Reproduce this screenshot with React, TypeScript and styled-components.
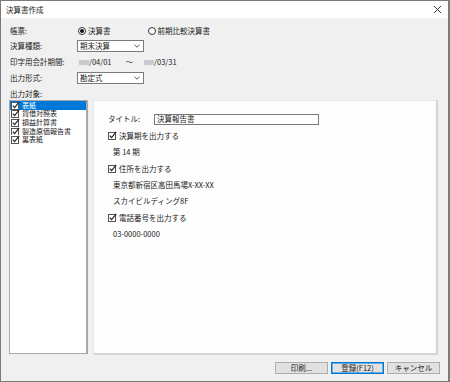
import React from 'react';
import styled, { createGlobalStyle } from 'styled-components';

const GlobalStyle = createGlobalStyle`
    html, body {
        margin: 0;
        padding: 0;
        background: #ffffff;
    }
    body {
        font-family: "Noto Sans CJK JP", "Noto Sans", sans-serif;
        font-size: 7.5px;
        color: #1a1a1a;
    }
`;

const Window = styled.div`
    box-sizing: border-box;
    width: 450px;
    height: 382px;
    border: 1px solid #7a7a7a;
    border-right-width: 2px;
    display: flex;
    flex-direction: column;
    background: #f0f0f0;
`;

const TitleBar = styled.div`
    height: 17px;
    flex: none;
    background: #ffffff;
    display: flex;
    align-items: center;
    justify-content: space-between;
    padding: 0 5px 0 5px;
    line-height: 1;
`;

const CloseButton = styled.span`
    display: flex;
    width: 9px;
    height: 9px;
    margin-right: 1px;
`;

const Body = styled.div`
    flex: 1;
    display: flex;
    flex-direction: column;
    padding: 8px 10px 0 8px;
`;

const FormGrid = styled.div`
    display: grid;
    grid-template-columns: 68px 1fr;
    grid-template-rows: 10px 12px 12px 12px 12px;
    row-gap: 4px;
    align-items: center;
`;

const Label = styled.div`
    padding-left: 1px;
    line-height: 1;
    white-space: nowrap;
`;

const Field = styled.div`
    display: flex;
    align-items: center;
    line-height: 1;
    white-space: nowrap;
`;

const RadioLabel = styled.label<{ $gap?: number }>`
    display: flex;
    align-items: center;
    gap: 2px;
    margin-left: ${(p) => p.$gap ?? 0}px;
`;

const RadioCircle = styled.span<{ $on?: boolean }>`
    box-sizing: border-box;
    width: 8px;
    height: 8px;
    border-radius: 50%;
    border: 1px solid #333;
    background: #fff;
    display: flex;
    align-items: center;
    justify-content: center;

    &::after {
        content: '';
        width: 4px;
        height: 4px;
        border-radius: 50%;
        background: ${(p) => (p.$on ? '#111' : 'transparent')};
    }
`;

const Select = styled.div`
    box-sizing: border-box;
    width: 67px;
    height: 12px;
    border: 1px solid #7a7a7a;
    background: #fff;
    display: flex;
    align-items: center;
    justify-content: space-between;
    padding: 0 3px 0 2px;
`;

const Blurred = styled.span<{ $ml?: number }>`
    display: inline-block;
    width: 10px;
    height: 5px;
    margin-left: ${(p) => p.$ml ?? 0}px;
    background: #c9c9d2;
    filter: blur(0.6px);
`;

const Tilde = styled.span`
    margin-left: 14px;
`;

const ContentRow = styled.div`
    display: flex;
    gap: 5px;
    height: 255px;
`;

const ListBox = styled.div`
    box-sizing: border-box;
    width: 79px;
    height: 254px;
    border: 1px solid #a8a8a8;
    border-right-width: 2px;
    background: #fff;
`;

const ListItem = styled.div<{ $selected?: boolean }>`
    height: 8.6px;
    display: flex;
    align-items: center;
    gap: 2px;
    padding-left: 1px;
    font-size: 7px;
    line-height: 7px;
    white-space: nowrap;
    overflow: hidden;
    color: ${(p) => (p.$selected ? '#fff' : '#1a1a1a')};
    background: ${(p) => (p.$selected ? '#0078d7' : 'transparent')};
`;

const Panel = styled.div`
    box-sizing: border-box;
    flex: 1;
    background: #fefdfd;
    border: 1px solid #e6e6e6;
    border-right: 2px solid #d4d4d4;
    border-bottom: 2px solid #d4d4d4;
    padding: 10px 0 0 14px;
    display: flex;
    flex-direction: column;
`;

const PanelRow = styled.div<{ $indent?: number }>`
    height: 16.4px;
    display: flex;
    align-items: center;
    padding-left: ${(p) => p.$indent ?? 0}px;
    line-height: 1;
    white-space: nowrap;
`;

const TitleLabel = styled.span`
    width: 46px;
`;

const TextInput = styled.div`
    box-sizing: border-box;
    width: 165px;
    height: 11px;
    border: 1px solid #7a7a7a;
    background: #fff;
    display: flex;
    align-items: center;
    padding-left: 2px;
`;

const CheckLabel = styled.label`
    display: flex;
    align-items: center;
    gap: 2px;
`;

const Footer = styled.div`
    display: flex;
    justify-content: flex-end;
    gap: 3px;
    margin-top: 7px;
    margin-right: -2px;
`;

const Button = styled.button<{ $primary?: boolean }>`
    box-sizing: border-box;
    width: 53px;
    height: 12px;
    padding: 0;
    margin: 0;
    font-family: inherit;
    font-size: 7.5px;
    line-height: 1;
    color: #1a1a1a;
    background: #e1e1e1;
    border: 1px solid ${(p) => (p.$primary ? '#0078d7' : '#adadad')};
    box-shadow: ${(p) => (p.$primary ? 'inset 0 0 0 0.5px #0078d7' : 'none')};
`;

const CheckIcon = ({ light }: { light?: boolean }) => (
    <svg width="9" height="9" viewBox="0 0 9 9" style={{ flex: 'none' }}>
        <rect x="0.5" y="1.5" width="7" height="7" fill={light ? '#fff' : 'none'} stroke="#555" strokeWidth="1" />
        <path d="M1.8 4.6 L3.6 6.6 L8.2 0.8" fill="none" stroke="#222" strokeWidth="1.1" />
    </svg>
);

const Chevron = () => (
    <svg width="6" height="4" viewBox="0 0 6 4">
        <path d="M0.5 0.8 L3 3.2 L5.5 0.8" fill="none" stroke="#444" strokeWidth="0.9" />
    </svg>
);

const listItems = ['表紙', '貸借対照表', '損益計算書', '製造原価報告書', '裏表紙'];

export default function App() {
    return (
        <>
            <GlobalStyle />
            <Window>
                <TitleBar>
                    <span>決算書作成</span>
                    <CloseButton>
                        <svg width="9" height="9" viewBox="0 0 9 9">
                            <path d="M1 1 L8 8 M8 1 L1 8" stroke="#222" strokeWidth="0.9" />
                        </svg>
                    </CloseButton>
                </TitleBar>
                <Body>
                    <FormGrid>
                        <Label>帳票:</Label>
                        <Field>
                            <RadioLabel $gap={1}>
                                <RadioCircle $on />
                                決算書
                            </RadioLabel>
                            <RadioLabel $gap={37}>
                                <RadioCircle />
                                前期比較決算書
                            </RadioLabel>
                        </Field>

                        <Label>決算種類:</Label>
                        <Field>
                            <Select>
                                期末決算
                                <Chevron />
                            </Select>
                        </Field>

                        <Label>印字用会計期間:</Label>
                        <Field>
                            <Blurred $ml={2} />
                            /04/01
                            <Tilde>～</Tilde>
                            <Blurred $ml={11} />
                            /03/31
                        </Field>

                        <Label>出力形式:</Label>
                        <Field>
                            <Select>
                                勘定式
                                <Chevron />
                            </Select>
                        </Field>

                        <Label>出力対象:</Label>
                        <div />
                    </FormGrid>

                    <ContentRow>
                        <ListBox>
                            {listItems.map((item, i) => (
                                <ListItem key={item} $selected={i === 0}>
                                    <CheckIcon light={i === 0} />
                                    {item}
                                </ListItem>
                            ))}
                        </ListBox>

                        <Panel>
                            <PanelRow>
                                <TitleLabel>タイトル:</TitleLabel>
                                <TextInput>決算報告書</TextInput>
                            </PanelRow>
                            <PanelRow>
                                <CheckLabel>
                                    <CheckIcon />
                                    決算期を出力する
                                </CheckLabel>
                            </PanelRow>
                            <PanelRow $indent={5}>第 14 期</PanelRow>
                            <PanelRow>
                                <CheckLabel>
                                    <CheckIcon />
                                    住所を出力する
                                </CheckLabel>
                            </PanelRow>
                            <PanelRow $indent={5}>東京都新宿区高田馬場X-XX-XX</PanelRow>
                            <PanelRow $indent={5}>スカイビルディング8F</PanelRow>
                            <PanelRow>
                                <CheckLabel>
                                    <CheckIcon />
                                    電話番号を出力する
                                </CheckLabel>
                            </PanelRow>
                            <PanelRow $indent={5}>03-0000-0000</PanelRow>
                        </Panel>
                    </ContentRow>

                    <Footer>
                        <Button>印刷...</Button>
                        <Button $primary>登録(F12)</Button>
                        <Button>キャンセル</Button>
                    </Footer>
                </Body>
            </Window>
        </>
    );
}
